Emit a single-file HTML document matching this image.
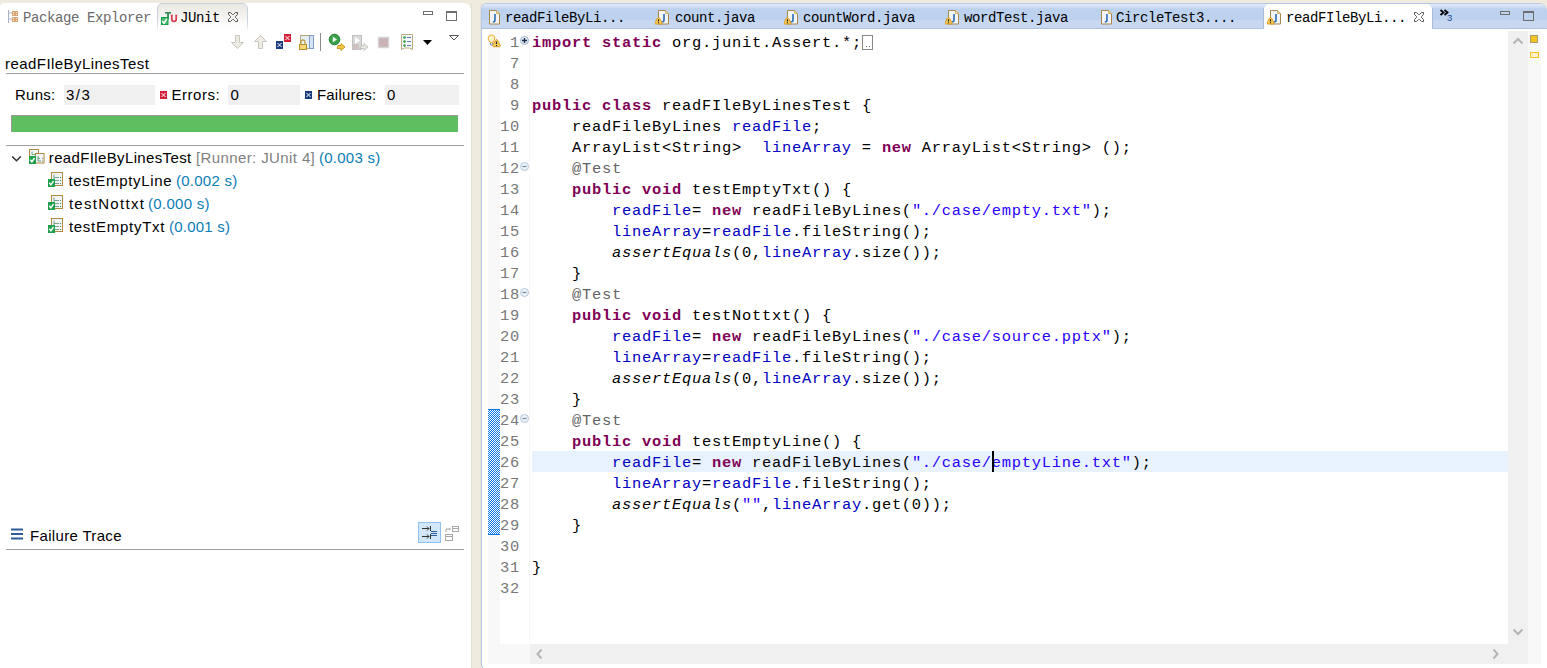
<!DOCTYPE html>
<html><head><meta charset="utf-8">
<style>
*{margin:0;padding:0;box-sizing:border-box}
html,body{width:1547px;height:668px;overflow:hidden;background:#EFEBDF;position:relative}
.a{position:absolute}
.sans{position:absolute;font-family:"Liberation Sans",sans-serif;font-size:15.7px;line-height:20px;white-space:pre;color:#000}
.tab{position:absolute;font-family:"Liberation Mono",monospace;font-size:14px;letter-spacing:-0.4px;line-height:20px;white-space:pre;color:#000}
.code{position:absolute;font-family:"Liberation Mono",monospace;font-size:15.4px;letter-spacing:0.76px;line-height:21px;white-space:pre;color:#000}
.k{color:#7F0055;font-weight:bold}
.f{color:#0000C0}
.s{color:#2A00FF}
.an{color:#646464}
.it{font-style:italic}
.ln{position:absolute;font-family:"Liberation Mono",monospace;font-size:15.4px;letter-spacing:0.76px;line-height:21px;white-space:pre;color:#787878;text-align:right;width:40px}
.box{position:absolute;background:#F0F0F0}
.blue{color:#0B7DB8}
.gray{color:#7F7F7F}
</style></head><body>

<!-- LEFT PANEL -->
<div class="a" style="left:0;top:3px;width:471px;height:665px;background:#fff;border-radius:4px 7px 0 0"></div>

<!-- Package Explorer tab -->
<svg class="a" style="left:7px;top:10px" width="12" height="14" viewBox="0 0 12 14">
 <path d="M1.5 0v13M1.5 3h4M1.5 9h4" stroke="#A7B2C2" stroke-width="1" fill="none"/>
 <rect x="5" y="1" width="6" height="5" fill="#D9A577"/><rect x="5" y="7" width="6" height="5" fill="#D9A577"/>
 <rect x="6" y="2" width="1" height="1" fill="#FFF2C0"/><rect x="9" y="2" width="1" height="1" fill="#FFF2C0"/>
 <rect x="6" y="4" width="1" height="1" fill="#FFF2C0"/><rect x="9" y="4" width="1" height="1" fill="#FFF2C0"/>
 <rect x="6" y="8" width="1" height="1" fill="#FFF2C0"/><rect x="9" y="8" width="1" height="1" fill="#FFF2C0"/>
 <rect x="6" y="10" width="1" height="1" fill="#FFF2C0"/><rect x="9" y="10" width="1" height="1" fill="#FFF2C0"/>
</svg>
<div id="tab1" class="tab" style="left:23px;top:8px;color:#6A6A6A">Package Explorer</div>

<!-- JUnit tab -->
<div class="a" style="left:157px;top:3px;width:91px;height:26px;border:1px solid #C9D0DE;border-bottom:none;border-radius:5px 5px 0 0;background:linear-gradient(#EAE8E2,#FFFFFF);-webkit-mask-image:linear-gradient(#000 60%,rgba(0,0,0,0.4))"></div>
<svg class="a" style="left:161px;top:11px" width="18" height="15" viewBox="0 0 18 15">
 <path d="M4 1.8h6" stroke="#2F8A52" stroke-width="1.6"/><path d="M7 1.8v6.5" stroke="#2F8A52" stroke-width="1.8"/>
 <path d="M10.8 4.2v4a2.2 2.2 0 0 0 4.4 0v-4" stroke="#D63A4C" stroke-width="1.7" fill="none"/>
 <path d="M9.8 4.2h2.2M14.2 4.2h2" stroke="#D63A4C" stroke-width="1"/>
 <rect x="0" y="6" width="7.5" height="8" fill="#14A049"/>
 <rect x="1" y="7" width="5.5" height="6" fill="#4DB774"/>
 <path d="M1.2 10l1.8 2.2 2.8-4.2" stroke="#fff" stroke-width="1.4" fill="none"/>
</svg>
<div id="tab2" class="tab" style="left:180px;top:8px">JUnit</div>
<svg class="a" style="left:228px;top:12px" width="11" height="11" viewBox="0 0 11 11">
 <path d="M0.5 0.5H2.5L4.5 2.5H5.5L7.5 0.5H9.5V2.5L7.5 4.5V5.5L9.5 7.5V9.5H7.5L5.5 7.5H4.5L2.5 9.5H0.5V7.5L2.5 5.5V4.5L0.5 2.5Z" stroke="#555" stroke-width="1" fill="none" stroke-linejoin="miter"/>
</svg>
<!-- min/max -->
<div class="a" style="left:423px;top:11px;width:10px;height:4px;border:1px solid #6E6E6E"></div>
<div class="a" style="left:446px;top:11px;width:11px;height:10px;border:1px solid #6E6E6E;border-top-width:2px"></div>

<!-- toolbar -->
<svg class="a" style="left:230px;top:33px" width="240" height="20" viewBox="0 0 240 20"><g transform="translate(0,1)">
 <!-- down arrow -->
 <path d="M4 1.5h4v7h4l-6 6-6-6h4z" transform="translate(1.5,0)" fill="#EDEBE4" stroke="#C9C6BC" stroke-width="1"/>
 <!-- up arrow -->
 <path d="M6 1l6 6h-4v7h-4v-7h-4z" transform="translate(24.5,0.5)" fill="#EDEBE4" stroke="#C9C6BC" stroke-width="1"/>
 <!-- errors -->
 <rect x="46" y="7" width="7" height="8" fill="#1B3D7F"/><path d="M47.5 9l4 4M51.5 9l-4 4" stroke="#fff" stroke-width="1"/>
 <rect x="54" y="0" width="7" height="8" fill="#D6203A"/><path d="M55.5 2l4 4M59.5 2l-4 4" stroke="#fff" stroke-width="1"/>
 <!-- lock layout -->
 <rect x="70.5" y="1.5" width="13" height="13" fill="#E3EEF9" stroke="#B9A878"/>
 <rect x="79.5" y="1.5" width="4" height="13" fill="#D6E4F5" stroke="#7E9CC4"/>
 <path d="M71 10v-2a2 2 0 0 1 4 0V10" stroke="#C4A040" stroke-width="1.3" fill="none"/>
 <rect x="69.5" y="10.5" width="7" height="5" fill="#F3D77A" stroke="#B8902A"/>
 <!-- separator -->
 <path d="M90.5 -1v18" stroke="#8A8A8A" stroke-width="1"/>
 <!-- rerun green -->
 <circle cx="104.5" cy="5.5" r="5.3" fill="#3AA04A" stroke="#1F7A2C"/>
 <path d="M102.8 2.6v6l4.2-3z" fill="#E8F6E8"/>
 <path d="M108 11.5h3v-2l4 3.5-4 3.5v-2h-4z" fill="#F5C842" stroke="#C08A10" stroke-width="0.8"/>
 <!-- rerun failed gray -->
 <rect x="122.5" y="1.5" width="9" height="14" fill="#D8D8D8" stroke="#C0C0C0"/>
 <path d="M125 3v7l5-3.5z" fill="#fff"/>
 <rect x="123" y="10" width="6" height="6" fill="#CFC0C2"/>
 <path d="M131 11.5h3v-2l4 3.5-4 3.5v-2h-4z" fill="#E8E6DE" stroke="#BDBDBD" stroke-width="0.8"/>
 <!-- stop -->
 <rect x="148.5" y="3.5" width="10" height="10" fill="#C9B1B6" stroke="#D5D5D5" stroke-width="1.5"/>
 <!-- history -->
 <path d="M171.5 0.5h11v15l-3-1.5h-5l-3 1.5z" fill="#F6F9FD" stroke="#B8AC80"/>
 <circle cx="174.5" cy="3.5" r="1.3" fill="#2E9E3E"/><circle cx="174.5" cy="7.5" r="1.3" fill="#2E9E3E"/><circle cx="174.5" cy="11.5" r="1.3" fill="#2E9E3E"/>
 <path d="M177 3.5h4M177 7.5h4M177 11.5h4" stroke="#5A7BB8" stroke-width="1"/>
 <!-- dropdown -->
 <path d="M193 6h9l-4.5 5z" fill="#000"/>
 <!-- view menu -->
 <path d="M219.5 1.5h9l-4.5 4.5z" fill="none" stroke="#555" stroke-width="1"/>
</g></svg>

<!-- title -->
<div id="t_title" class="sans" style="font-size:15px;letter-spacing:0.44px;left:5px;top:53.8px">readFIleByLinesTest</div>
<div class="a" style="left:6px;top:73px;width:458px;height:1px;background:#A0A0A0"></div>

<!-- counters -->
<div id="t_runs" class="sans" style="font-size:15px;letter-spacing:0.25px;left:15px;top:84.8px">Runs:</div>
<div class="box" style="left:64px;top:85px;width:91px;height:20px"></div>
<div id="t_33" class="sans" style="font-size:15px;letter-spacing:1.5px;left:66px;top:84.8px">3/3</div>
<svg class="a" style="left:160px;top:91px" width="8" height="8" viewBox="0 0 8 8"><rect width="7" height="8" fill="#D6203A"/><path d="M1.5 2l4 4M5.5 2l-4 4" stroke="#fff" stroke-width="1"/></svg>
<div id="t_err" class="sans" style="font-size:15px;letter-spacing:0.53px;left:171.5px;top:84.8px">Errors:</div>
<div class="box" style="left:228px;top:85px;width:72px;height:20px"></div>
<div id="t_e0" class="sans" style="font-size:15px;letter-spacing:0px;left:230.5px;top:84.8px">0</div>
<svg class="a" style="left:305px;top:91px" width="8" height="8" viewBox="0 0 8 8"><rect width="7" height="8" fill="#1B3D7F"/><path d="M1.5 2l4 4M5.5 2l-4 4" stroke="#fff" stroke-width="1"/></svg>
<div id="t_fail" class="sans" style="font-size:15px;letter-spacing:0.23px;left:316.9px;top:84.8px">Failures:</div>
<div class="box" style="left:385px;top:85px;width:74px;height:20px"></div>
<div id="t_f0" class="sans" style="font-size:15px;letter-spacing:0px;left:387px;top:84.8px">0</div>

<!-- progress -->
<div class="a" style="left:11px;top:115px;width:447px;height:17px;background:#5FBE5F;border-top:1px solid #9A9A9A;border-left:1px solid #9A9A9A"></div>
<div class="a" style="left:6px;top:145px;width:458px;height:1px;background:#A0A0A0"></div>

<!-- tree -->
<svg class="a" style="left:11px;top:155px" width="11" height="8" viewBox="0 0 11 8"><path d="M1.2 1.5l4.3 4.2 4.3-4.2" stroke="#333" stroke-width="1.6" fill="none"/></svg>
<svg class="a" style="left:28px;top:148px" width="17" height="17" viewBox="0 0 17 17">
 <rect x="1.5" y="1.5" width="9" height="9" fill="#F2F5F8" stroke="#B08A40"/>
 <path d="M4 3.5v3h3" stroke="#7AAA88" stroke-width="1" fill="none"/>
 <rect x="7.5" y="5.5" width="8.5" height="9.5" fill="#F2F5F8" stroke="#B08A40"/>
 <path d="M10 8v5h3M10 10.5h2M14 10.5h1M14 13h1" stroke="#6C9A7A" stroke-width="1" fill="none"/>
 <rect x="1" y="8" width="7" height="8" fill="#1EA04C"/>
 <path d="M2.3 11.8l1.6 2 2.6-3.8" stroke="#fff" stroke-width="1.4" fill="none"/>
</svg>
<div id="t_suite" class="sans" style="font-size:15px;letter-spacing:0.36px;left:48.8px;top:147.8px">readFIleByLinesTest</div><div id="t_runner" class="sans gray" style="font-size:15px;letter-spacing:0.39px;left:196px;top:147.8px">[Runner: JUnit 4]</div><div id="t_t0" class="sans blue" style="font-size:15px;letter-spacing:0.25px;left:319px;top:147.8px">(0.003 s)</div>
<svg class="a" style="left:47px;top:172px" width="17" height="17" viewBox="0 0 17 17">
 <rect x="4.5" y="0.5" width="11" height="13" fill="#F2F5F8" stroke="#B08A40"/>
 <path d="M7 2.5v9M7 5.5h5M7 8.5h5M7 11.5h5" stroke="#7AA488" stroke-width="1" fill="none"/>
 <path d="M13.5 5v1M13.5 8v1M13.5 11v1" stroke="#4C8A5C" stroke-width="1"/>
 <rect x="1" y="7" width="7" height="8" fill="#1EA04C"/>
 <path d="M2.3 10.8l1.6 2 2.6-3.8" stroke="#fff" stroke-width="1.4" fill="none"/>
</svg>
<div id="t_n1" class="sans" style="font-size:15px;letter-spacing:0.67px;left:68.5px;top:170.8px">testEmptyLine</div><div id="t_t1" class="sans blue" style="font-size:15px;letter-spacing:0.25px;left:176px;top:170.8px">(0.002 s)</div>
<svg class="a" style="left:47px;top:195px" width="17" height="17" viewBox="0 0 17 17">
 <rect x="4.5" y="0.5" width="11" height="13" fill="#F2F5F8" stroke="#B08A40"/>
 <path d="M7 2.5v9M7 5.5h5M7 8.5h5M7 11.5h5" stroke="#7AA488" stroke-width="1" fill="none"/>
 <path d="M13.5 5v1M13.5 8v1M13.5 11v1" stroke="#4C8A5C" stroke-width="1"/>
 <rect x="1" y="7" width="7" height="8" fill="#1EA04C"/>
 <path d="M2.3 10.8l1.6 2 2.6-3.8" stroke="#fff" stroke-width="1.4" fill="none"/>
</svg>
<div id="t_n2" class="sans" style="font-size:15px;letter-spacing:1.29px;left:68.9px;top:193.8px">testNottxt</div><div id="t_t2" class="sans blue" style="font-size:15px;letter-spacing:0.3px;left:148px;top:193.8px">(0.000 s)</div>
<svg class="a" style="left:47px;top:218px" width="17" height="17" viewBox="0 0 17 17">
 <rect x="4.5" y="0.5" width="11" height="13" fill="#F2F5F8" stroke="#B08A40"/>
 <path d="M7 2.5v9M7 5.5h5M7 8.5h5M7 11.5h5" stroke="#7AA488" stroke-width="1" fill="none"/>
 <path d="M13.5 5v1M13.5 8v1M13.5 11v1" stroke="#4C8A5C" stroke-width="1"/>
 <rect x="1" y="7" width="7" height="8" fill="#1EA04C"/>
 <path d="M2.3 10.8l1.6 2 2.6-3.8" stroke="#fff" stroke-width="1.4" fill="none"/>
</svg>
<div id="t_n3" class="sans" style="font-size:15px;letter-spacing:0.73px;left:68.9px;top:216.8px">testEmptyTxt</div><div id="t_t3" class="sans blue" style="font-size:15px;letter-spacing:0.23px;left:169px;top:216.8px">(0.001 s)</div>

<!-- failure trace -->
<svg class="a" style="left:11px;top:528px" width="13" height="12" viewBox="0 0 13 12">
 <rect x="0" y="0.5" width="12" height="2" fill="#2C5C9A"/><rect x="0" y="5" width="12" height="2" fill="#2C5C9A"/><rect x="0" y="9.5" width="12" height="2" fill="#2C5C9A"/>
</svg>
<div id="t_ft" class="sans" style="font-size:15px;letter-spacing:0.33px;left:30px;top:525.8px">Failure Trace</div>
<div class="a" style="left:418px;top:522px;width:23px;height:21px;background:#D3E7FB;border:1px solid #8DC1F2"></div>
<svg class="a" style="left:421px;top:525px" width="17" height="15" viewBox="0 0 17 15">
 <path d="M1 3.5h7M6 1.5l2 2-2 2M9.5 1v5M1 11.5h7M6 9.5l2 2-2 2M9.5 9v5" stroke="#333" stroke-width="1" fill="none"/>
 <path d="M10 6.5h6M10 8.5h6M10 10.5h6" stroke="#2C5C9A" stroke-width="1.2"/>
</svg>
<svg class="a" style="left:444px;top:525px" width="17" height="17" viewBox="0 0 17 17">
 <rect x="8.5" y="1.5" width="6" height="5" fill="none" stroke="#A8A8A8"/><path d="M8.5 3.5h6" stroke="#A8A8A8"/>
 <rect x="1.5" y="9.5" width="7" height="6" fill="none" stroke="#A8A8A8"/><path d="M1.5 11.5h7" stroke="#A8A8A8"/>
 <path d="M2 7v-3h4M5 3l1.5 1-1.5 1" stroke="#A8A8A8" fill="none"/>
</svg>
<div class="a" style="left:6px;top:549px;width:458px;height:1px;background:#A0A0A0"></div>

<!-- RIGHT PANEL -->
<div class="a" style="left:471px;top:3px;width:1px;height:665px;background:#E3E1D7"></div>
<div class="a" style="left:480px;top:3px;width:1px;height:665px;background:#E6E2D6"></div>
<div class="a" style="left:481px;top:3px;width:1066px;height:668px;background:#fff;border-left:1px solid #B5C5E5;border-top:1px solid #B5C5E5;border-radius:6px 8px 0 0"></div><div class="a" style="left:481px;top:666px;width:1px;height:2px;background:#EFEBDF"></div><div class="a" style="left:482px;top:666px;width:1px;height:2px;background:#B5C5E5"></div>
<div class="a" style="left:482px;top:4px;width:1065px;height:25px;background:linear-gradient(#E6EEF9 0px,#DCE7F7 1px,#C6D8F1 4px,#BDD2EE 5px,#BDD2EE 16px,#C9D8F1 16px,#C9D8F1 24px);border-bottom:1px solid #B2C0DC;border-radius:5px 7px 0 0"></div>
<!-- active tab -->
<div class="a" style="left:1264px;top:4px;width:168px;height:25px;background:#fff;clip-path:polygon(4px 0,calc(100% - 4px) 0,100% 4px,100% 100%,0 100%,0 4px)"></div><div class="a" style="left:1263px;top:8px;width:1px;height:20px;background:#A9BBD8"></div><div class="a" style="left:1432px;top:8px;width:1px;height:20px;background:#A9BBD8"></div>
<svg class="a" style="left:489px;top:10px" width="15" height="16" viewBox="0 0 15 16">
 <path d="M0.5 0.5h7l3 3v10.5h-10z" fill="#F1F5FA" stroke="#A8884A"/><path d="M7.5 0.5v3h3" fill="#F3D98C" stroke="#C8A860" stroke-width="0.8"/>
 <path d="M6 4v6q0 2-2.2 2" stroke="#2A6BB5" stroke-width="1.6" fill="none"/>
</svg>
<div id="tab3" class="tab" style="left:505px;top:8px">readFileByLi...</div>
<svg class="a" style="left:655px;top:10px" width="15" height="16" viewBox="0 0 15 16">
 <path d="M3.5 0.5h7l3 3v10.5h-10z" fill="#F1F5FA" stroke="#A8884A"/><path d="M10.5 0.5v3h3" fill="#F3D98C" stroke="#C8A860" stroke-width="0.8"/>
 <path d="M9 4v6q0 2-2.2 2" stroke="#2A6BB5" stroke-width="1.6" fill="none"/>
 <path d="M3.5 7.5q0.8 0 1.3 1l2.2 4.3q0.5 1.2-0.8 1.2h-5.4q-1.3 0-0.8-1.2l2.2-4.3q0.5-1 1.3-1z" fill="#F8CD55" stroke="#D8901C" stroke-width="0.9"/>
 <path d="M3.5 9.3v2.2M3.5 12.3v1" stroke="#222" stroke-width="1.1"/>
</svg>
<div id="tab4" class="tab" style="left:675px;top:8px">count.java</div>
<svg class="a" style="left:784px;top:10px" width="15" height="16" viewBox="0 0 15 16">
 <path d="M3.5 0.5h7l3 3v10.5h-10z" fill="#F1F5FA" stroke="#A8884A"/><path d="M10.5 0.5v3h3" fill="#F3D98C" stroke="#C8A860" stroke-width="0.8"/>
 <path d="M9 4v6q0 2-2.2 2" stroke="#2A6BB5" stroke-width="1.6" fill="none"/>
 <path d="M3.5 7.5q0.8 0 1.3 1l2.2 4.3q0.5 1.2-0.8 1.2h-5.4q-1.3 0-0.8-1.2l2.2-4.3q0.5-1 1.3-1z" fill="#F8CD55" stroke="#D8901C" stroke-width="0.9"/>
 <path d="M3.5 9.3v2.2M3.5 12.3v1" stroke="#222" stroke-width="1.1"/>
</svg>
<div id="tab5" class="tab" style="left:803px;top:8px">countWord.java</div>
<svg class="a" style="left:945px;top:10px" width="15" height="16" viewBox="0 0 15 16">
 <path d="M3.5 0.5h7l3 3v10.5h-10z" fill="#F1F5FA" stroke="#A8884A"/><path d="M10.5 0.5v3h3" fill="#F3D98C" stroke="#C8A860" stroke-width="0.8"/>
 <path d="M9 4v6q0 2-2.2 2" stroke="#2A6BB5" stroke-width="1.6" fill="none"/>
 <path d="M3.5 7.5q0.8 0 1.3 1l2.2 4.3q0.5 1.2-0.8 1.2h-5.4q-1.3 0-0.8-1.2l2.2-4.3q0.5-1 1.3-1z" fill="#F8CD55" stroke="#D8901C" stroke-width="0.9"/>
 <path d="M3.5 9.3v2.2M3.5 12.3v1" stroke="#222" stroke-width="1.1"/>
</svg>
<div id="tab6" class="tab" style="left:964px;top:8px">wordTest.java</div>
<svg class="a" style="left:1101px;top:10px" width="15" height="16" viewBox="0 0 15 16">
 <path d="M0.5 0.5h7l3 3v10.5h-10z" fill="#F1F5FA" stroke="#A8884A"/><path d="M7.5 0.5v3h3" fill="#F3D98C" stroke="#C8A860" stroke-width="0.8"/>
 <path d="M6 4v6q0 2-2.2 2" stroke="#2A6BB5" stroke-width="1.6" fill="none"/>
</svg>
<div id="tab7" class="tab" style="left:1116px;top:8px">CircleTest3....</div>
<svg class="a" style="left:1267px;top:10px" width="15" height="16" viewBox="0 0 15 16">
 <path d="M3.5 0.5h7l3 3v10.5h-10z" fill="#F1F5FA" stroke="#A8884A"/><path d="M10.5 0.5v3h3" fill="#F3D98C" stroke="#C8A860" stroke-width="0.8"/>
 <path d="M9 4v6q0 2-2.2 2" stroke="#2A6BB5" stroke-width="1.6" fill="none"/>
 <path d="M3.5 7.5q0.8 0 1.3 1l2.2 4.3q0.5 1.2-0.8 1.2h-5.4q-1.3 0-0.8-1.2l2.2-4.3q0.5-1 1.3-1z" fill="#F8CD55" stroke="#D8901C" stroke-width="0.9"/>
 <path d="M3.5 9.3v2.2M3.5 12.3v1" stroke="#222" stroke-width="1.1"/>
</svg>
<div id="tab8" class="tab" style="left:1286px;top:8px">readFIleByLi...</div>

<svg class="a" style="left:1414px;top:12px" width="11" height="11" viewBox="0 0 11 11">
 <path d="M0.5 0.5H2.5L4.5 2.5H5.5L7.5 0.5H9.5V2.5L7.5 4.5V5.5L9.5 7.5V9.5H7.5L5.5 7.5H4.5L2.5 9.5H0.5V7.5L2.5 5.5V4.5L0.5 2.5Z" stroke="#555" stroke-width="1" fill="none" stroke-linejoin="miter"/>
</svg>
<svg class="a" style="left:1439px;top:9px" width="16" height="14" viewBox="0 0 16 14">
 <path d="M1.5 1l3 2.5-3 2.5M5.5 1l3 2.5-3 2.5" stroke="#000" stroke-width="1.8" fill="none"/>
</svg>
<div class="a" style="left:1447px;top:13px;font-family:'Liberation Sans',sans-serif;font-size:9.5px;line-height:10px;color:#1D4E9A">3</div>
<div class="a" style="left:1500px;top:11px;width:10px;height:4px;border:1px solid #6E6E6E"></div>
<div class="a" style="left:1523px;top:11px;width:11px;height:10px;border:1px solid #6E6E6E;border-top-width:2px"></div>

<!-- editor rulers -->
<div class="a" style="left:488px;top:31px;width:12px;height:633px;background:#F8F8F8"></div><div class="a" style="left:488px;top:644px;width:42px;height:20px;background:#F8F8F8"></div>
<div class="a" style="left:529px;top:31px;width:1px;height:613px;background:#F6F6F6"></div>
<div class="a" style="left:530px;top:644px;width:978px;height:20px;background:#F0F0F0"></div>
<div class="a" style="left:1508px;top:31px;width:20px;height:633px;background:#F0F0F0"></div>
<div class="a" style="left:1528px;top:31px;width:13px;height:633px;background:#F8F8F8"></div>
<svg class="a" style="left:535px;top:648px" width="10" height="12" viewBox="0 0 10 12"><path d="M6.5 1.5l-4 4.5 4 4.5" stroke="#B4B4B4" stroke-width="2" fill="none"/></svg>
<svg class="a" style="left:1491px;top:648px" width="10" height="12" viewBox="0 0 10 12"><path d="M2.5 1.5l4 4.5-4 4.5" stroke="#B4B4B4" stroke-width="2" fill="none"/></svg>
<svg class="a" style="left:1512px;top:36px" width="12" height="10" viewBox="0 0 12 10"><path d="M1.5 7.5l4.5-4.5 4.5 4.5" stroke="#B4B4B4" stroke-width="2" fill="none"/></svg>
<svg class="a" style="left:1512px;top:627px" width="12" height="10" viewBox="0 0 12 10"><path d="M1.5 2.5l4.5 4.5 4.5-4.5" stroke="#B4B4B4" stroke-width="2" fill="none"/></svg>
<div class="a" style="left:1530px;top:35px;width:8px;height:8px;background:#F5C526;border:1px solid #A89A70"></div>
<div class="a" style="left:1530px;top:52px;width:9px;height:6px;background:#FFF0C8;border:1px solid #F5C526"></div>

<!-- quick diff bar -->
<div class="a" style="left:488px;top:409px;width:12px;height:127px;background:#fff"></div><div class="a" style="left:488px;top:409px;width:12px;height:126px;border-top:1px solid #0A74E2;border-bottom:1px solid #0A74E2;background:repeating-conic-gradient(#0A74E2 0 25%,#FFFFFF 0 50%) 0 0/2px 2px"></div>

<!-- current line -->
<div class="a" style="left:532px;top:451px;width:976px;height:21px;background:#E8F2FE"></div>

<!-- line numbers & code -->
<div class="ln" style="left:480px;top:33px">1
7
8
9
10
11
12
13
14
15
16
17
18
19
20
21
22
23
24
25
26
27
28
29
30
31
32</div>
<div class="code" style="left:532px;top:33px"><span class="k">import</span> <span class="k">static</span> org.junit.Assert.*;


<span class="k">public</span> <span class="k">class</span> readFIleByLinesTest {
    readFileByLines <span class="f">readFile</span>;
    ArrayList&lt;String&gt;  <span class="f">lineArray</span> = <span class="k">new</span> ArrayList&lt;String&gt; ();
    <span class="an">@Test</span>
    <span class="k">public</span> <span class="k">void</span> testEmptyTxt() {
        <span class="f">readFile</span>= <span class="k">new</span> readFileByLines(<span class="s">"./case/empty.txt"</span>);
        <span class="f">lineArray</span>=<span class="f">readFile</span>.fileString();
        <span class="it">assertEquals</span>(0,<span class="f">lineArray</span>.size());
    }
    <span class="an">@Test</span>
    <span class="k">public</span> <span class="k">void</span> testNottxt() {
        <span class="f">readFile</span>= <span class="k">new</span> readFileByLines(<span class="s">"./case/source.pptx"</span>);
        <span class="f">lineArray</span>=<span class="f">readFile</span>.fileString();
        <span class="it">assertEquals</span>(0,<span class="f">lineArray</span>.size());
    }
    <span class="an">@Test</span>
    <span class="k">public</span> <span class="k">void</span> testEmptyLine() {
        <span class="f">readFile</span>= <span class="k">new</span> readFileByLines(<span class="s">"./case/emptyLine.txt"</span>);
        <span class="f">lineArray</span>=<span class="f">readFile</span>.fileString();
        <span class="it">assertEquals</span>(<span class="s">""</span>,<span class="f">lineArray</span>.get(0));
    }

}
</div>
<!-- cursor -->
<div class="a" style="left:992px;top:451px;width:2px;height:21px;background:#000"></div>

<!-- fold icons -->
<svg class="a" style="left:520px;top:36px" width="10" height="10" viewBox="0 0 10 10"><circle cx="4.5" cy="4.5" r="4" fill="#DDEBF8" stroke="#A4B4C8"/><path d="M2 4.5h5M4.5 2v5" stroke="#1F2A44" stroke-width="1.3"/></svg>
<svg class="a" style="left:520px;top:162px" width="10" height="10" viewBox="0 0 10 10"><circle cx="4.5" cy="4.5" r="4" fill="#EAF3FC" stroke="#B8C6D8"/><path d="M2.5 4.5h4" stroke="#7A8898" stroke-width="1.2"/></svg>
<svg class="a" style="left:520px;top:288px" width="10" height="10" viewBox="0 0 10 10"><circle cx="4.5" cy="4.5" r="4" fill="#EAF3FC" stroke="#B8C6D8"/><path d="M2.5 4.5h4" stroke="#7A8898" stroke-width="1.2"/></svg>
<svg class="a" style="left:520px;top:414px" width="10" height="10" viewBox="0 0 10 10"><circle cx="4.5" cy="4.5" r="4" fill="#EAF3FC" stroke="#B8C6D8"/><path d="M2.5 4.5h4" stroke="#7A8898" stroke-width="1.2"/></svg>

<!-- import collapsed box & bulb -->
<div class="a" style="left:862px;top:35px;width:11px;height:15px;border:1px solid #888"></div><div class="a" style="left:866px;top:46px;width:1px;height:1px;background:#666"></div><div class="a" style="left:869px;top:46px;width:1px;height:1px;background:#666"></div>
<svg class="a" style="left:487px;top:34px" width="14" height="14" viewBox="0 0 14 14">
 <path d="M4.5 1a3.3 3.3 0 0 0-2.2 5.8l0.9 1.7h2.6l0.9-1.7A3.3 3.3 0 0 0 4.5 1z" fill="#FDF3C6" stroke="#EBAA2C" stroke-width="1"/>
 <path d="M3.3 9v1.5q1.2 1.2 2.4 0V9" stroke="#5C7CA8" stroke-width="1" fill="none"/>
 <path d="M9.5 5.5q0.6 0 1 0.8l2.8 5.2q0.4 1-0.7 1.2h-6.2q-1.1-0.2-0.7-1.2l2.8-5.2q0.4-0.8 1-0.8z" fill="#F8D060" stroke="#D99A20" stroke-width="1"/>
 <path d="M9.5 7.5v2.5M9.5 11v1" stroke="#222" stroke-width="1.2"/>
</svg>
</body></html>
